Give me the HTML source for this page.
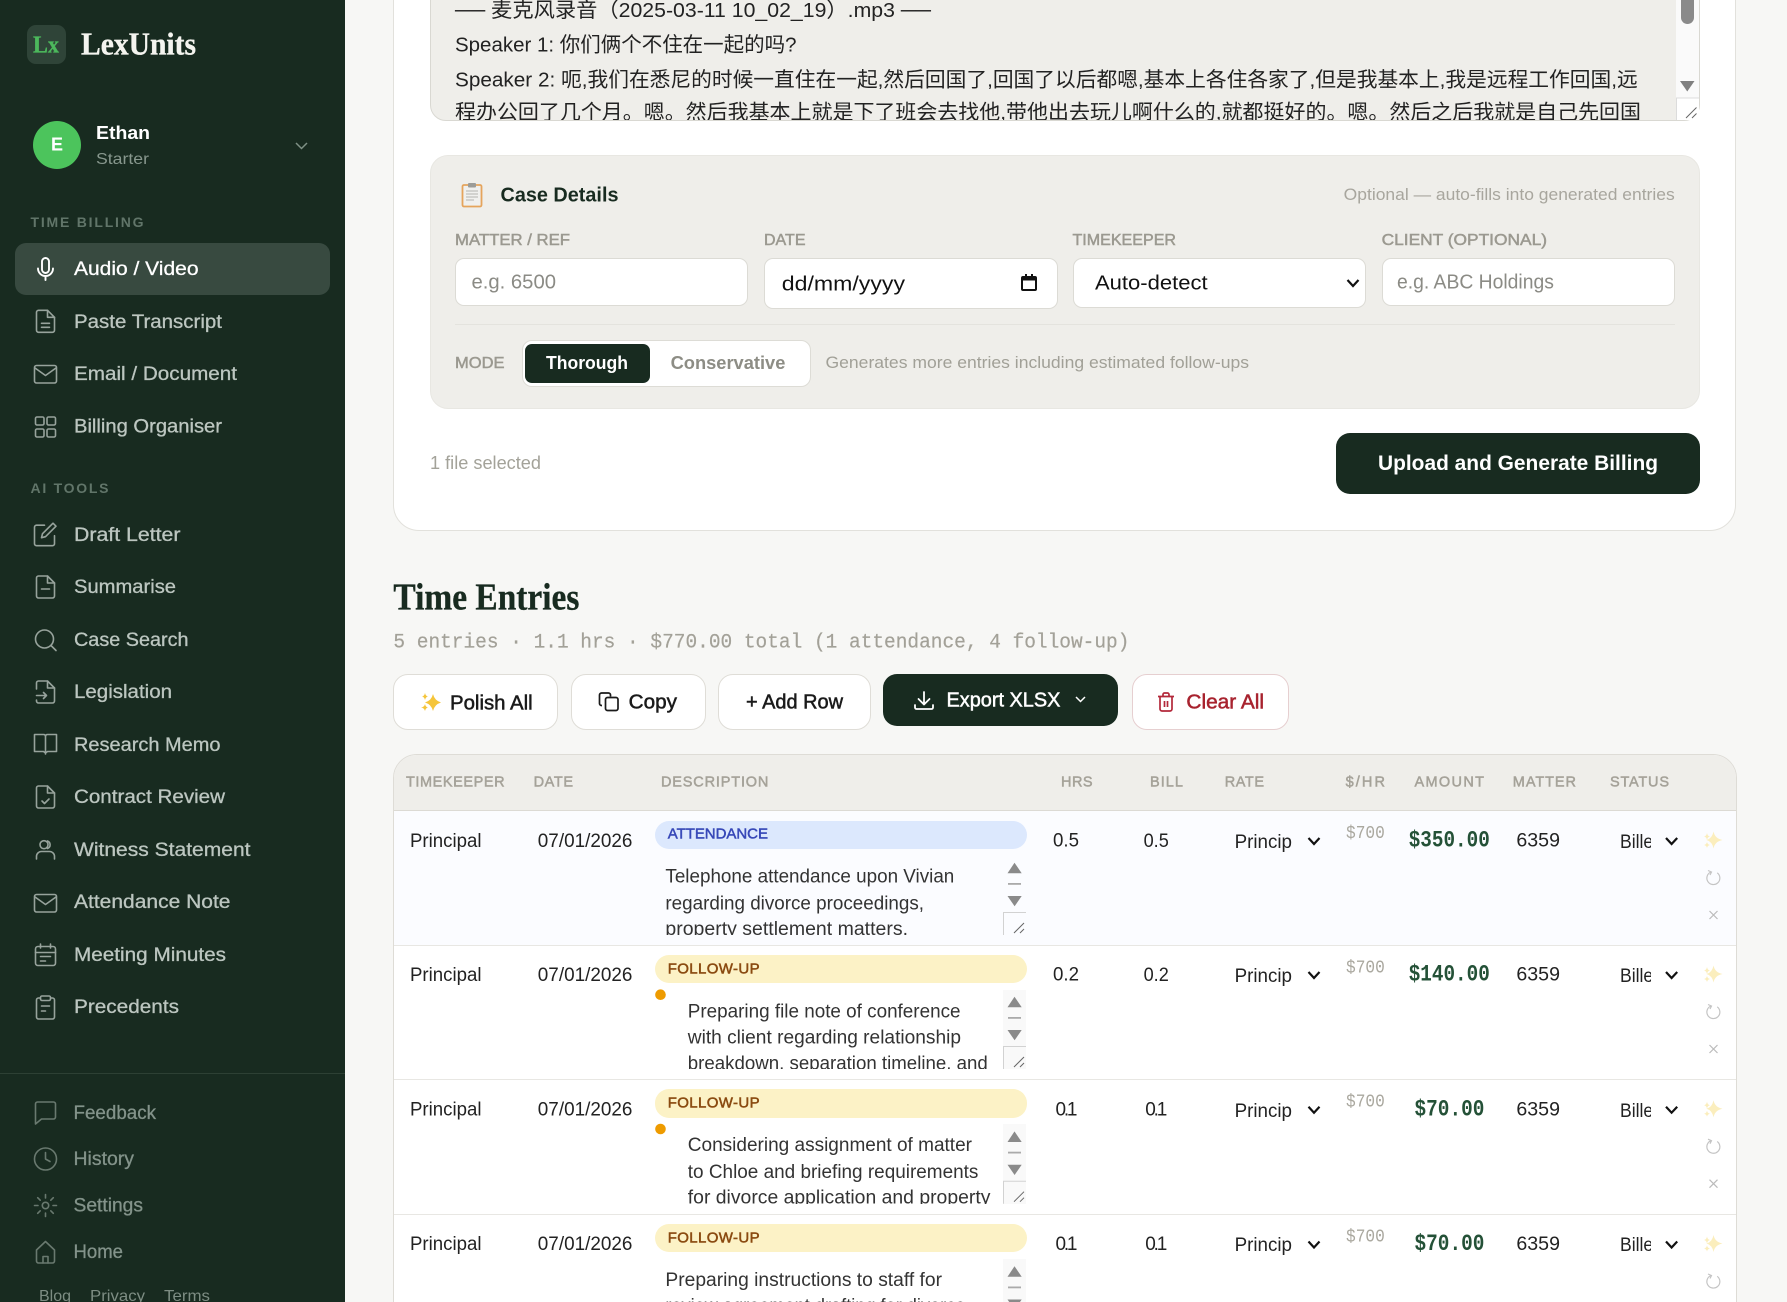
<!DOCTYPE html>
<html lang="en"><head><meta charset="utf-8"><title>LexUnits</title>
<style>
html,body{margin:0;padding:0;width:1787px;height:1302px;overflow:hidden;background:#f7f7f5}
#page{position:relative;width:1787px;height:1302px;overflow:hidden;background:#f7f7f5}
.b{position:absolute;box-sizing:border-box}
svg.o{position:absolute;left:0;top:0}
text{font-family:"Liberation Sans","Noto Sans CJK SC",sans-serif;white-space:pre;fill:currentColor}
.m{stroke:currentColor;stroke-width:.3px}
.h{stroke:currentColor;stroke-width:.5px}
.mo{font-family:"Liberation Mono",monospace}
.se{font-family:"Liberation Serif",serif;font-weight:bold;stroke:currentColor;stroke-width:.35px}
.nav{font-size:19.5px;color:#bcc6c0}
.dim{font-size:19.5px;color:#83938a}
.sec{font-size:14px;font-weight:bold;color:#617569}
.lab{font-size:16px;color:#9b9990}
.th{font-size:14.5px;color:#a5a299}
.td{font-size:19px;color:#222}
.ds{font-size:19px;color:#333}
.bd{font-size:15px}
.rate{font-size:18px;color:#aaa89f}
.amt{font-size:23px;font-weight:bold;color:#245137}
.ph{font-size:20px;color:#8b8b85}
.ic{fill:none;stroke:currentColor;stroke-width:1.6;stroke-linecap:round;stroke-linejoin:round}
</style></head><body><div id="page">
<div class="b" style="left:0;top:0;width:345px;height:1302px;background:#182b20"></div>
<div class="b" style="left:27px;top:25px;width:39px;height:39px;border-radius:9px;background:#2f4438"></div>
<div class="b" style="left:33px;top:121px;width:48px;height:48px;border-radius:50%;background:#4cc45c"></div>
<div class="b" style="left:15px;top:243px;width:315px;height:52px;border-radius:11px;background:#384a40"></div>
<div class="b" style="left:0;top:1073px;width:345px;height:1px;background:#2d4034"></div>

<div class="b" style="left:393px;top:-100px;width:1343px;height:631px;border-radius:26px;background:#fff;border:1px solid #e2e1dc"></div>
<div class="b" style="left:430px;top:-40px;width:1270px;height:160.5px;border-radius:16px;background:#efeeea;border:1px solid #d9d8d2"></div>
<div class="b" style="left:1676px;top:0;width:23px;height:98px;background:#fafafa"></div>
<div class="b" style="left:1676px;top:98px;width:23px;height:22px;background:#fff"></div>
<div class="b" style="left:430px;top:155px;width:1270px;height:254px;border-radius:18px;background:#efeeea;border:1px solid #e8e7e2"></div>
<div class="b" style="left:455px;top:258px;width:293px;height:47.5px;border-radius:9px;background:#fff;border:1px solid #dcdbd5"></div>
<div class="b" style="left:764px;top:258px;width:294px;height:50.5px;border-radius:9px;background:#fff;border:1px solid #dcdbd5"></div>
<div class="b" style="left:1072.5px;top:258px;width:293px;height:50px;border-radius:9px;background:#fff;border:1px solid #dcdbd5"></div>
<div class="b" style="left:1381.5px;top:258px;width:293px;height:47.5px;border-radius:9px;background:#fff;border:1px solid #dcdbd5"></div>
<div class="b" style="left:455px;top:324px;width:1220px;height:1px;background:#e4e3de"></div>
<div class="b" style="left:521.5px;top:340px;width:289px;height:47px;border-radius:10px;background:#fff;border:1px solid #dddcd6"></div>
<div class="b" style="left:525px;top:344px;width:125px;height:39px;border-radius:7px;background:#182b20"></div>
<div class="b" style="left:1336px;top:433px;width:364px;height:60.5px;border-radius:14px;background:#182b20"></div>

<div class="b" style="left:393px;top:674px;width:165px;height:55.5px;border-radius:15px;background:#fff;border:1px solid #dfddd7"></div>
<div class="b" style="left:570.5px;top:674px;width:135px;height:55.5px;border-radius:15px;background:#fff;border:1px solid #dfddd7"></div>
<div class="b" style="left:718px;top:674px;width:153px;height:55.5px;border-radius:15px;background:#fff;border:1px solid #dfddd7"></div>
<div class="b" style="left:883px;top:674px;width:235px;height:52px;border-radius:14px;background:#182b20"></div>
<div class="b" style="left:1131.5px;top:674px;width:157.5px;height:55.5px;border-radius:15px;background:#fff;border:1px solid #e6cfd0"></div>

<div class="b" style="left:393px;top:754px;width:1343.5px;height:600px;border-radius:24px;background:#fff;border:1px solid #dedcd6;overflow:hidden">
  <div class="b" style="left:0;top:0;width:1342px;height:56px;background:#efeeea;border-bottom:1px solid #dcdad4"></div>
  <div class="b" style="left:0;top:56px;width:1342px;height:135px;background:#fbfcff;border-bottom:1px solid #e8e7e3"></div>
  <div class="b" style="left:0;top:191px;width:1342px;height:134px;border-bottom:1px solid #e8e7e3"></div>
  <div class="b" style="left:0;top:325px;width:1342px;height:135px;border-bottom:1px solid #e8e7e3"></div>
</div>
<div class="b" style="left:655px;top:820.5px;width:372px;height:28.5px;border-radius:14px;background:#dce8fd"></div>
<div class="b" style="left:655px;top:955px;width:372px;height:28px;border-radius:14px;background:#fcf2c6"></div>
<div class="b" style="left:655px;top:1089px;width:372px;height:29px;border-radius:14px;background:#fcf2c6"></div>
<div class="b" style="left:655px;top:1224px;width:372px;height:28px;border-radius:14px;background:#fcf2c6"></div>
<div class="b" style="left:1003px;top:990px;width:23px;height:79px;background:#f9f9f9"></div>
<div class="b" style="left:1003px;top:1124px;width:23px;height:80px;background:#f9f9f9"></div>
<div class="b" style="left:1003px;top:1259px;width:23px;height:43px;background:#f9f9f9"></div>

<svg class="o" width="1787" height="1302" viewBox="0 0 1787 1302" xmlns="http://www.w3.org/2000/svg">
<defs>
<clipPath id="ct"><rect x="431" y="-10" width="1245" height="130"/></clipPath>
<clipPath id="c1"><rect x="650" y="860" width="353" height="75"/></clipPath>
<clipPath id="c2"><rect x="650" y="990" width="353" height="79"/></clipPath>
<clipPath id="c3"><rect x="650" y="1125" width="353" height="79"/></clipPath>
<clipPath id="cb"><rect x="1610" y="820" width="41" height="480"/></clipPath>
<clipPath id="cp"><rect x="1230" y="820" width="62" height="480"/></clipPath>
</defs>

<!-- sidebar -->
<text class="se" x="33" y="52.5" font-size="24" style="color:#4cb85c" textLength="26" lengthAdjust="spacingAndGlyphs">Lx</text>
<text class="se" x="81" y="54.5" font-size="32" style="color:#f4f4ef" textLength="115" lengthAdjust="spacingAndGlyphs">LexUnits</text>
<text x="57" y="150.5" font-size="18" font-weight="bold" text-anchor="middle" style="color:#fff">E</text>
<text x="96" y="139" font-size="18.5" font-weight="bold" style="color:#fff" textLength="54" lengthAdjust="spacingAndGlyphs">Ethan</text>
<text x="96" y="164" font-size="16" style="color:#87978d" textLength="53" lengthAdjust="spacingAndGlyphs">Starter</text>
<path d="M296 143l5.5 5.5 5.5-5.5" fill="none" stroke="#7f9186" stroke-width="1.5"/>
<text class="sec" x="30.5" y="227" textLength="113" lengthAdjust="spacing">TIME BILLING</text>
<text class="sec" x="30.5" y="493" textLength="78" lengthAdjust="spacing">AI TOOLS</text>

<text class="nav m" x="74" y="275" style="color:#fff" textLength="124.5" lengthAdjust="spacingAndGlyphs">Audio / Video</text>
<text class="nav m" x="74" y="328" textLength="148" lengthAdjust="spacingAndGlyphs">Paste Transcript</text>
<text class="nav m" x="74" y="380" textLength="163" lengthAdjust="spacingAndGlyphs">Email / Document</text>
<text class="nav m" x="74" y="432.7" textLength="148" lengthAdjust="spacingAndGlyphs">Billing Organiser</text>
<text class="nav m" x="74" y="541" textLength="106.5" lengthAdjust="spacingAndGlyphs">Draft Letter</text>
<text class="nav m" x="74" y="592.8" textLength="102" lengthAdjust="spacingAndGlyphs">Summarise</text>
<text class="nav m" x="74" y="646" textLength="114.5" lengthAdjust="spacingAndGlyphs">Case Search</text>
<text class="nav m" x="74" y="697.8" textLength="98" lengthAdjust="spacingAndGlyphs">Legislation</text>
<text class="nav m" x="74" y="751" textLength="146.5" lengthAdjust="spacingAndGlyphs">Research Memo</text>
<text class="nav m" x="74" y="803" textLength="151" lengthAdjust="spacingAndGlyphs">Contract Review</text>
<text class="nav m" x="74" y="856" textLength="176.5" lengthAdjust="spacingAndGlyphs">Witness Statement</text>
<text class="nav m" x="74" y="907.8" textLength="156.5" lengthAdjust="spacingAndGlyphs">Attendance Note</text>
<text class="nav m" x="74" y="961" textLength="152" lengthAdjust="spacingAndGlyphs">Meeting Minutes</text>
<text class="nav m" x="74" y="1013" textLength="105" lengthAdjust="spacingAndGlyphs">Precedents</text>
<text class="dim m" x="73.5" y="1118.8" textLength="82.5" lengthAdjust="spacingAndGlyphs">Feedback</text>
<text class="dim m" x="73.5" y="1165" textLength="60.5" lengthAdjust="spacingAndGlyphs">History</text>
<text class="dim m" x="73.5" y="1211.7" textLength="69.5" lengthAdjust="spacingAndGlyphs">Settings</text>
<text class="dim m" x="73.5" y="1257.8" textLength="49.5" lengthAdjust="spacingAndGlyphs">Home</text>
<text x="39" y="1301" font-size="16" style="color:#7d8d83" textLength="32" lengthAdjust="spacingAndGlyphs">Blog</text>
<text x="90" y="1301" font-size="16" style="color:#7d8d83" textLength="55" lengthAdjust="spacingAndGlyphs">Privacy</text>
<text x="164" y="1301" font-size="16" style="color:#7d8d83" textLength="46" lengthAdjust="spacingAndGlyphs">Terms</text>

<!-- sidebar icons -->
<g class="ic" style="color:#fff;stroke-width:1.9" transform="translate(33.5,257)"><rect x="8.500" y="1" width="7" height="15" rx="3.500"/><path d="M4.500 11.500a7.500 7.500 0 0 0 15 0M12 19v4"/></g>
<g class="ic" style="color:#97a39c">
<g transform="translate(33.5,309.3)"><path d="M14 1H5a2 2 0 0 0-2 2v18a2 2 0 0 0 2 2h14a2 2 0 0 0 2-2V8z"/><path d="M14 1v7h7M8 14h8M8 18h8"/></g>
<g transform="translate(33.5,362)"><rect x="1" y="3.500" width="22" height="17.500" rx="2"/><path d="M1.500 6l10.500 7.500L22.500 6"/></g>
<g transform="translate(33.5,415)"><rect x="2" y="2" width="8.500" height="8" rx="1.500"/><rect x="13.500" y="2" width="8.500" height="8" rx="1.500"/><rect x="2" y="14" width="8.500" height="8" rx="1.500"/><rect x="13.500" y="14" width="8.500" height="8" rx="1.500"/></g>
<g transform="translate(33.5,521.7)"><path d="M11 3.500H3a2 2 0 0 0-2 2V22a2 2 0 0 0 2 2h16a2 2 0 0 0 2-2v-8"/><path d="M19.500 1.500l3 3L12 15l-4 1 1-4z"/></g>
<g transform="translate(33.5,575)"><path d="M14 1H5a2 2 0 0 0-2 2v18a2 2 0 0 0 2 2h14a2 2 0 0 0 2-2V8z"/><path d="M14 1v7h7M8 14h8"/></g>
<g transform="translate(33.5,628)"><circle cx="11" cy="11" r="9"/><path d="M22.500 22.500l-5-5"/></g>
<g transform="translate(33.5,680)"><path d="M3 9V3a2 2 0 0 1 2-2h9l7 7v13a2 2 0 0 1-2 2H5a2 2 0 0 1-2-2v-1"/><path d="M14 1v7h7M3 15.500h10M10 12.500l3 3-3 3"/></g>
<g transform="translate(33.5,731)"><path d="M1 3.500h9c1.200 0 2 .8 2 2 0-1.200.8-2 2-2h9v17H14l-2 1.500L10 20.500H1zM12 5.500V23"/></g>
<g transform="translate(33.5,785)"><path d="M14 1H5a2 2 0 0 0-2 2v18a2 2 0 0 0 2 2h14a2 2 0 0 0 2-2V8z"/><path d="M14 1v7h7M8.500 16l2.500 2.500 4.500-4.500"/></g>
<g transform="translate(33.5,838)"><circle cx="10.500" cy="6.700" r="4"/><path d="M14 3a4 4 0 0 1 0 7.500M3 21v-2.500a5 5 0 0 1 5-5h8a5 5 0 0 1 5 5V21"/></g>
<g transform="translate(33.5,891)"><rect x="1" y="3.500" width="22" height="17.500" rx="2"/><path d="M1.500 6l10.500 7.500L22.500 6"/></g>
<g transform="translate(33.5,943)"><rect x="2" y="3.500" width="20" height="19" rx="2.500"/><path d="M7 1v4M17 1v4M2 9.500h20M7 13.500h10M7 18h5"/></g>
<g transform="translate(33.5,995)"><rect x="7" y="1" width="10" height="4.500" rx="1.500"/><path d="M17 3h2a2 2 0 0 1 2 2v17a2 2 0 0 1-2 2H5a2 2 0 0 1-2-2V5a2 2 0 0 1 2-2h2M8 11h8M8 16h4"/></g>
</g>
<g class="ic" style="color:#69796f">
<g transform="translate(33.5,1100)"><path d="M2 24V4a2 2 0 0 1 2-2h16a2 2 0 0 1 2 2v13a2 2 0 0 1-2 2H8z"/></g>
<g transform="translate(33.5,1147)"><circle cx="12" cy="12" r="11"/><path d="M12 5.500V12l4.500 2.500"/></g>
<g transform="translate(33.5,1193.500)"><circle cx="12" cy="12" r="3.200"/><path d="M12 1v3.500M12 19.500V23M1 12h3.500M19.500 12H23M4.200 4.200l2.500 2.500M17.300 17.300l2.500 2.500M4.200 19.800l2.500-2.500M17.300 6.700l2.500-2.500"/></g>
<g transform="translate(33.5,1240)"><path d="M3 10l9-8.500 9 8.500v11a2 2 0 0 1-2 2H5a2 2 0 0 1-2-2z"/><path d="M9.500 23v-6.500h5V23"/></g>
</g>

<!-- transcript -->
<g clip-path="url(#ct)" font-size="20.5" style="color:#222">
<text x="455" y="17" textLength="476" lengthAdjust="spacingAndGlyphs">── 麦克风录音（2025-03-11 10_02_19）.mp3 ──</text>
<text x="455" y="51.7" textLength="341.500" lengthAdjust="spacingAndGlyphs">Speaker 1: 你们俩个不住在一起的吗?</text>
<text x="455" y="86.7" textLength="1182.700" lengthAdjust="spacingAndGlyphs">Speaker 2: 呃,我们在悉尼的时候一直住在一起,然后回国了,回国了以后都嗯,基本上各住各家了,但是我基本上,我是远程工作回国,远</text>
<text x="455" y="119" textLength="1186" lengthAdjust="spacingAndGlyphs">程办公回了几个月。嗯。然后我基本上就是下了班会去找他,带他出去玩儿啊什么的,就都挺好的。嗯。然后之后我就是自己先回国</text>
</g>
<rect x="1681" y="-6" width="13" height="30" rx="6.500" fill="#8a8a8a"/>
<path d="M1680 81h14.500l-7.250 10.500z" fill="#808080"/>
<path d="M1676.500 120V98H1699" fill="none" stroke="#dcdcdc"/>
<path d="M1686 118l10.500-10.500M1692 118l4.500-4.500" stroke="#666" fill="none"/>

<!-- case details -->
<rect x="462.500" y="185" width="19" height="21.500" rx="1.500" fill="#f0f0ee" stroke="#e5a45c" stroke-width="1.800"/>
<rect x="468" y="183" width="8" height="4.500" rx="1" fill="#9c9c98"/>
<path d="M466 191h12M466 194h12M466 197h12M466 200h8" stroke="#b5b5b0" stroke-width="1"/>
<text x="500.500" y="201.500" font-size="20" font-weight="bold" style="color:#182b20" textLength="118" lengthAdjust="spacingAndGlyphs">Case Details</text>
<text x="1343.700" y="200" font-size="16.500" style="color:#a8a69e" textLength="331" lengthAdjust="spacingAndGlyphs">Optional — auto-fills into generated entries</text>
<text class="lab h" x="455" y="245" textLength="115" lengthAdjust="spacingAndGlyphs">MATTER / REF</text>
<text class="lab h" x="764" y="245" textLength="41.500" lengthAdjust="spacingAndGlyphs">DATE</text>
<text class="lab h" x="1072.500" y="245" textLength="103.500" lengthAdjust="spacingAndGlyphs">TIMEKEEPER</text>
<text class="lab h" x="1381.600" y="245" textLength="165.400" lengthAdjust="spacingAndGlyphs">CLIENT (OPTIONAL)</text>
<text class="ph" x="471.500" y="288.300" textLength="84.500" lengthAdjust="spacingAndGlyphs">e.g. 6500</text>
<text x="781.800" y="290.700" font-size="20" style="color:#111" textLength="123.200" lengthAdjust="spacingAndGlyphs">dd/mm/yyyy</text>
<rect x="1022" y="277" width="14" height="13" rx="1" fill="none" stroke="#111" stroke-width="2"/>
<rect x="1022" y="276.500" width="14" height="4" fill="#111"/><rect x="1025" y="274" width="2" height="3" fill="#111"/><rect x="1031" y="274" width="2" height="3" fill="#111"/>
<text x="1095" y="289.700" font-size="20" style="color:#111" textLength="112.600" lengthAdjust="spacingAndGlyphs">Auto-detect</text>
<path d="M1347.500 280l5.500 6 5.500-6" fill="none" stroke="#111" stroke-width="2.200"/>
<text class="ph" x="1397" y="288.300" textLength="156.900" lengthAdjust="spacingAndGlyphs">e.g. ABC Holdings</text>
<text class="lab h" x="455" y="368" textLength="49.500" lengthAdjust="spacingAndGlyphs">MODE</text>
<text x="546" y="369" font-size="18.500" font-weight="bold" style="color:#fff" textLength="82" lengthAdjust="spacingAndGlyphs">Thorough</text>
<text x="670.600" y="369" font-size="18.500" font-weight="bold" style="color:#8d8d85" textLength="114.800" lengthAdjust="spacingAndGlyphs">Conservative</text>
<text x="825.500" y="368" font-size="16.500" style="color:#a1a097" textLength="423.500" lengthAdjust="spacingAndGlyphs">Generates more entries including estimated follow-ups</text>
<text x="430" y="469" font-size="18" style="color:#a3a299" textLength="111" lengthAdjust="spacingAndGlyphs">1 file selected</text>
<text x="1378" y="470" font-size="21" font-weight="bold" style="color:#fff" textLength="280" lengthAdjust="spacingAndGlyphs">Upload and Generate Billing</text>

<!-- time entries -->
<text class="se" x="393.400" y="609.300" font-size="38" style="color:#182b20" textLength="186" lengthAdjust="spacingAndGlyphs">Time Entries</text>
<text class="mo m" x="393.400" y="647.300" font-size="20" style="color:#a3a198;stroke-width:.2px" textLength="736" lengthAdjust="spacingAndGlyphs">5 entries · 1.1 hrs · $770.00 total (1 attendance, 4 follow-up)</text>

<g fill="#f5c53a"><path d="M433 694Q434.500 700.500 441 702.500Q434.500 704.500 433 711Q431.500 704.500 425 702.500Q431.500 700.500 433 694Z"/><path d="M425 693Q425.600 696 428 696.500Q425.600 697 425 700Q424.400 697 422 696.500Q424.400 696 425 693Z"/><path d="M425 704Q425.600 707 428 707.500Q425.600 708 425 711Q424.400 708 421 707.500Q424.400 707 425 704Z"/></g>
<text class="h" x="450" y="709.300" font-size="20" style="color:#1a1a1a" textLength="82.700" lengthAdjust="spacingAndGlyphs">Polish All</text>
<g fill="none" stroke="#1a1a1a" stroke-width="1.700"><rect x="605.500" y="697.500" width="12.500" height="13" rx="2"/><path d="M602 705.500h-.5a2 2 0 0 1-2-2V695a2 2 0 0 1 2-2h7a2 2 0 0 1 2 2v1.500"/></g>
<text class="h" x="628.700" y="708.700" font-size="20" style="color:#1a1a1a" textLength="48.300" lengthAdjust="spacingAndGlyphs">Copy</text>
<text class="h" x="746" y="708.700" font-size="20" style="color:#1a1a1a" textLength="97" lengthAdjust="spacingAndGlyphs">+ Add Row</text>
<path d="M924 692v12M918.500 699l5.500 5.500 5.500-5.500M915 705v2.500a1.500 1.500 0 0 0 1.500 1.500h15a1.500 1.500 0 0 0 1.500-1.500V705" fill="none" stroke="#fff" stroke-width="1.800" stroke-linecap="round" stroke-linejoin="round"/>
<text class="h" x="946.500" y="706.700" font-size="20" style="color:#fff" textLength="113.900" lengthAdjust="spacingAndGlyphs">Export XLSX</text>
<path d="M1076 697l4.500 4.500 4.500-4.500" fill="none" stroke="#fff" stroke-width="1.500"/>
<path d="M1158 696.500h16M1160 696.500V709a2 2 0 0 0 2 2h8a2 2 0 0 0 2-2V696.500M1163 696.500v-2a1.500 1.500 0 0 1 1.500-1.500h3a1.500 1.500 0 0 1 1.500 1.500v2M1164.500 701v6M1167.500 701v6" fill="none" stroke="#b3283a" stroke-width="1.700"/>
<text class="h" x="1186.400" y="708.300" font-size="20" style="color:#a8232f" textLength="77.600" lengthAdjust="spacingAndGlyphs">Clear All</text>

<!-- table head -->
<g class="th">
<text class="h" x="406" y="786.500" textLength="98.600" lengthAdjust="spacing">TIMEKEEPER</text>
<text class="h" x="533.600" y="786.500" textLength="39.400" lengthAdjust="spacing">DATE</text>
<text class="h" x="661" y="786.500" textLength="107.400" lengthAdjust="spacing">DESCRIPTION</text>
<text class="h" x="1061" y="786.500" textLength="31.600" lengthAdjust="spacing">HRS</text>
<text class="h" x="1150" y="786.500" textLength="33" lengthAdjust="spacing">BILL</text>
<text class="h" x="1224.700" y="786.500" textLength="39.300" lengthAdjust="spacing">RATE</text>
<text class="h" x="1345.600" y="786.500" textLength="39.400" lengthAdjust="spacing">$/HR</text>
<text class="h" x="1414.500" y="786.500" textLength="69.500" lengthAdjust="spacing">AMOUNT</text>
<text class="h" x="1512.800" y="786.500" textLength="63.200" lengthAdjust="spacing">MATTER</text>
<text class="h" x="1610" y="786.500" textLength="59" lengthAdjust="spacing">STATUS</text>
</g>

<!-- row 1 -->
<text class="td" x="410" y="847" textLength="71.500" lengthAdjust="spacingAndGlyphs">Principal</text>
<text class="td" x="537.800" y="847" textLength="94.600" lengthAdjust="spacingAndGlyphs">07/01/2026</text>
<text class="bd h" x="667.700" y="838.500" style="color:#3748b8" textLength="100.300" lengthAdjust="spacing">ATTENDANCE</text>
<g clip-path="url(#c1)">
<text class="ds" x="665.400" y="882.500" textLength="288.900" lengthAdjust="spacingAndGlyphs">Telephone attendance upon Vivian</text>
<text class="ds" x="665.400" y="909.300" textLength="258.600" lengthAdjust="spacingAndGlyphs">regarding divorce proceedings,</text>
<text class="ds" x="665.400" y="935" textLength="242.600" lengthAdjust="spacingAndGlyphs">property settlement matters.</text>
</g>
<text class="td" x="1053" y="846.700" textLength="26" lengthAdjust="spacingAndGlyphs">0.5</text>
<text class="td" x="1143.600" y="847" textLength="25.200" lengthAdjust="spacingAndGlyphs">0.5</text>
<text class="td" x="1234.600" y="848" clip-path="url(#cp)" textLength="57.400" lengthAdjust="spacingAndGlyphs">Princip</text>
<text class="mo rate" x="1346" y="838" textLength="38.800" lengthAdjust="spacingAndGlyphs">$700</text>
<text class="mo amt" x="1408.700" y="846.700" textLength="81.100" lengthAdjust="spacingAndGlyphs">$350.00</text>
<text class="td" x="1516.400" y="846.700" textLength="43.600" lengthAdjust="spacingAndGlyphs">6359</text>
<text class="td" x="1620" y="848" clip-path="url(#cb)" textLength="43" lengthAdjust="spacingAndGlyphs">Billed</text>

<!-- row 2 -->
<text class="td" x="410" y="981" textLength="71.500" lengthAdjust="spacingAndGlyphs">Principal</text>
<text class="td" x="537.800" y="981" textLength="94.600" lengthAdjust="spacingAndGlyphs">07/01/2026</text>
<text class="bd h" x="667.700" y="973.500" style="color:#8a4a10" textLength="91.900" lengthAdjust="spacing">FOLLOW-UP</text>
<circle cx="660.500" cy="994.700" r="5.300" fill="#ee9b00"/>
<g clip-path="url(#c2)">
<text class="ds" x="687.800" y="1017.500" textLength="272.700" lengthAdjust="spacingAndGlyphs">Preparing file note of conference</text>
<text class="ds" x="687.800" y="1043.700" textLength="273.200" lengthAdjust="spacingAndGlyphs">with client regarding relationship</text>
<text class="ds" x="687.800" y="1069.300" textLength="300" lengthAdjust="spacingAndGlyphs">breakdown, separation timeline, and</text>
</g>
<text class="td" x="1053" y="980.700" textLength="26" lengthAdjust="spacingAndGlyphs">0.2</text>
<text class="td" x="1143.600" y="981" textLength="25.200" lengthAdjust="spacingAndGlyphs">0.2</text>
<text class="td" x="1234.600" y="982" clip-path="url(#cp)" textLength="57.400" lengthAdjust="spacingAndGlyphs">Princip</text>
<text class="mo rate" x="1346" y="972.300" textLength="38.800" lengthAdjust="spacingAndGlyphs">$700</text>
<text class="mo amt" x="1408.700" y="980.700" textLength="81.100" lengthAdjust="spacingAndGlyphs">$140.00</text>
<text class="td" x="1516.400" y="980.700" textLength="43.600" lengthAdjust="spacingAndGlyphs">6359</text>
<text class="td" x="1620" y="982" clip-path="url(#cb)" textLength="43" lengthAdjust="spacingAndGlyphs">Billed</text>

<!-- row 3 -->
<text class="td" x="410" y="1115.700" textLength="71.500" lengthAdjust="spacingAndGlyphs">Principal</text>
<text class="td" x="537.800" y="1115.700" textLength="94.600" lengthAdjust="spacingAndGlyphs">07/01/2026</text>
<text class="bd h" x="667.700" y="1107.500" style="color:#8a4a10" textLength="91.900" lengthAdjust="spacing">FOLLOW-UP</text>
<circle cx="660.500" cy="1129" r="5.300" fill="#ee9b00"/>
<g clip-path="url(#c3)">
<text class="ds" x="687.800" y="1151" textLength="284.200" lengthAdjust="spacingAndGlyphs">Considering assignment of matter</text>
<text class="ds" x="687.800" y="1178" textLength="290.600" lengthAdjust="spacingAndGlyphs">to Chloe and briefing requirements</text>
<text class="ds" x="687.800" y="1203.300" textLength="302.600" lengthAdjust="spacingAndGlyphs">for divorce application and property</text>
</g>
<text class="td" x="1055.500" y="1115.700" textLength="22" lengthAdjust="spacing">0.1</text>
<text class="td" x="1145.300" y="1115.700" textLength="22" lengthAdjust="spacing">0.1</text>
<text class="td" x="1234.600" y="1117" clip-path="url(#cp)" textLength="57.400" lengthAdjust="spacingAndGlyphs">Princip</text>
<text class="mo rate" x="1346" y="1106.500" textLength="38.800" lengthAdjust="spacingAndGlyphs">$700</text>
<text class="mo amt" x="1414.500" y="1115.700" textLength="69.900" lengthAdjust="spacingAndGlyphs">$70.00</text>
<text class="td" x="1516.400" y="1115.700" textLength="43.600" lengthAdjust="spacingAndGlyphs">6359</text>
<text class="td" x="1620" y="1117" clip-path="url(#cb)" textLength="43" lengthAdjust="spacingAndGlyphs">Billed</text>

<!-- row 4 -->
<text class="td" x="410" y="1250" textLength="71.500" lengthAdjust="spacingAndGlyphs">Principal</text>
<text class="td" x="537.800" y="1250" textLength="94.600" lengthAdjust="spacingAndGlyphs">07/01/2026</text>
<text class="bd h" x="667.700" y="1242.300" style="color:#8a4a10" textLength="91.900" lengthAdjust="spacing">FOLLOW-UP</text>
<text class="ds" x="665.400" y="1286" textLength="276.600" lengthAdjust="spacingAndGlyphs">Preparing instructions to staff for</text>
<text class="ds" x="665.400" y="1312" textLength="300" lengthAdjust="spacingAndGlyphs">review agreement drafting for divorce</text>
<text class="td" x="1055.500" y="1250" textLength="22" lengthAdjust="spacing">0.1</text>
<text class="td" x="1145.300" y="1250" textLength="22" lengthAdjust="spacing">0.1</text>
<text class="td" x="1234.600" y="1251" clip-path="url(#cp)" textLength="57.400" lengthAdjust="spacingAndGlyphs">Princip</text>
<text class="mo rate" x="1346" y="1241.500" textLength="38.800" lengthAdjust="spacingAndGlyphs">$700</text>
<text class="mo amt" x="1414.500" y="1250" textLength="69.900" lengthAdjust="spacingAndGlyphs">$70.00</text>
<text class="td" x="1516.400" y="1250" textLength="43.600" lengthAdjust="spacingAndGlyphs">6359</text>
<text class="td" x="1620" y="1251" clip-path="url(#cb)" textLength="43" lengthAdjust="spacingAndGlyphs">Billed</text>

<!-- repeated row controls -->
<g>
<path d="M1308.500 838l5.500 6 5.500-6M1666 838l5.600 6 5.600-6" fill="none" stroke="#111" stroke-width="2.200"/>
<path d="M1007.500 873.300L1014.500 862.700L1021.700 873.300zM1007.500 896h14.200l-7.100 10.300z" fill="#8a8a8a"/>
<rect x="1008" y="883" width="13" height="1.800" fill="#aaa"/>
<path d="M1003.500 935V912.500H1026" fill="none" stroke="#d2d2d2"/>
<path d="M1014 933l10-10M1020 933l4-4" stroke="#666" fill="none"/>
<path d="M1713.500 831.500Q1714.800 838.500 1722.500 840Q1714.800 841.500 1713.500 848.500Q1712.200 841.500 1706.500 840Q1712.200 838.500 1713.500 831.500Z" fill="#fbeebd"/>
<path d="M1707 833Q1707.500 836 1710 836.500Q1707.500 837 1707 840Q1706.500 837 1704 836.500Q1706.500 836 1707 833ZM1707 842Q1707.500 844.500 1710 845Q1707.500 845.500 1707 848Q1706.500 845.500 1704 845Q1706.500 844.500 1707 842Z" fill="#fbeebd"/>
<path d="M1711 872A6.500 6.500 0 1 0 1717.200 872.800M1708 870.500L1711.500 872L1710 875" fill="none" stroke="#c4c4c4" stroke-width="1.200"/>
<path d="M1709.500 911l8 8M1717.500 911l-8 8" stroke="#bbb" stroke-width="1.200"/>
</g>
<g transform="translate(0,134)">
<path d="M1308.500 838l5.500 6 5.500-6M1666 838l5.600 6 5.600-6" fill="none" stroke="#111" stroke-width="2.200"/>
<path d="M1007.500 873.300L1014.500 862.700L1021.700 873.300zM1007.500 896h14.200l-7.100 10.300z" fill="#8a8a8a"/>
<rect x="1008" y="883" width="13" height="1.800" fill="#aaa"/>
<path d="M1003.500 935V912.500H1026" fill="none" stroke="#d2d2d2"/>
<path d="M1014 933l10-10M1020 933l4-4" stroke="#666" fill="none"/>
<path d="M1713.500 831.500Q1714.800 838.500 1722.500 840Q1714.800 841.500 1713.500 848.500Q1712.200 841.500 1706.500 840Q1712.200 838.500 1713.500 831.500Z" fill="#fbeebd"/>
<path d="M1707 833Q1707.500 836 1710 836.500Q1707.500 837 1707 840Q1706.500 837 1704 836.500Q1706.500 836 1707 833ZM1707 842Q1707.500 844.500 1710 845Q1707.500 845.500 1707 848Q1706.500 845.500 1704 845Q1706.500 844.500 1707 842Z" fill="#fbeebd"/>
<path d="M1711 872A6.500 6.500 0 1 0 1717.200 872.800M1708 870.500L1711.500 872L1710 875" fill="none" stroke="#c4c4c4" stroke-width="1.200"/>
<path d="M1709.500 911l8 8M1717.500 911l-8 8" stroke="#bbb" stroke-width="1.200"/>
</g>
<g transform="translate(0,268.700)">
<path d="M1308.500 838l5.500 6 5.500-6M1666 838l5.600 6 5.600-6" fill="none" stroke="#111" stroke-width="2.200"/>
<path d="M1007.500 873.300L1014.500 862.700L1021.700 873.300zM1007.500 896h14.200l-7.100 10.300z" fill="#8a8a8a"/>
<rect x="1008" y="883" width="13" height="1.800" fill="#aaa"/>
<path d="M1003.500 935V912.500H1026" fill="none" stroke="#d2d2d2"/>
<path d="M1014 933l10-10M1020 933l4-4" stroke="#666" fill="none"/>
<path d="M1713.500 831.500Q1714.800 838.500 1722.500 840Q1714.800 841.500 1713.500 848.500Q1712.200 841.500 1706.500 840Q1712.200 838.500 1713.500 831.500Z" fill="#fbeebd"/>
<path d="M1707 833Q1707.500 836 1710 836.500Q1707.500 837 1707 840Q1706.500 837 1704 836.500Q1706.500 836 1707 833ZM1707 842Q1707.500 844.500 1710 845Q1707.500 845.500 1707 848Q1706.500 845.500 1704 845Q1706.500 844.500 1707 842Z" fill="#fbeebd"/>
<path d="M1711 872A6.500 6.500 0 1 0 1717.200 872.800M1708 870.500L1711.500 872L1710 875" fill="none" stroke="#c4c4c4" stroke-width="1.200"/>
<path d="M1709.500 911l8 8M1717.500 911l-8 8" stroke="#bbb" stroke-width="1.200"/>
</g>
<g transform="translate(0,403.500)">
<path d="M1308.500 838l5.500 6 5.500-6M1666 838l5.600 6 5.600-6" fill="none" stroke="#111" stroke-width="2.200"/>
<path d="M1007.500 873.300L1014.500 862.700L1021.700 873.300zM1007.500 896h14.200l-7.100 10.300z" fill="#8a8a8a"/>
<rect x="1008" y="883" width="13" height="1.800" fill="#aaa"/>
<path d="M1713.500 831.500Q1714.800 838.500 1722.500 840Q1714.800 841.500 1713.500 848.500Q1712.200 841.500 1706.500 840Q1712.200 838.500 1713.500 831.500Z" fill="#fbeebd"/>
<path d="M1707 833Q1707.500 836 1710 836.500Q1707.500 837 1707 840Q1706.500 837 1704 836.500Q1706.500 836 1707 833ZM1707 842Q1707.500 844.500 1710 845Q1707.500 845.500 1707 848Q1706.500 845.500 1704 845Q1706.500 844.500 1707 842Z" fill="#fbeebd"/>
<path d="M1711 872A6.500 6.500 0 1 0 1717.200 872.800M1708 870.500L1711.500 872L1710 875" fill="none" stroke="#c4c4c4" stroke-width="1.200"/>
</g>
</svg>
</div></body></html>
